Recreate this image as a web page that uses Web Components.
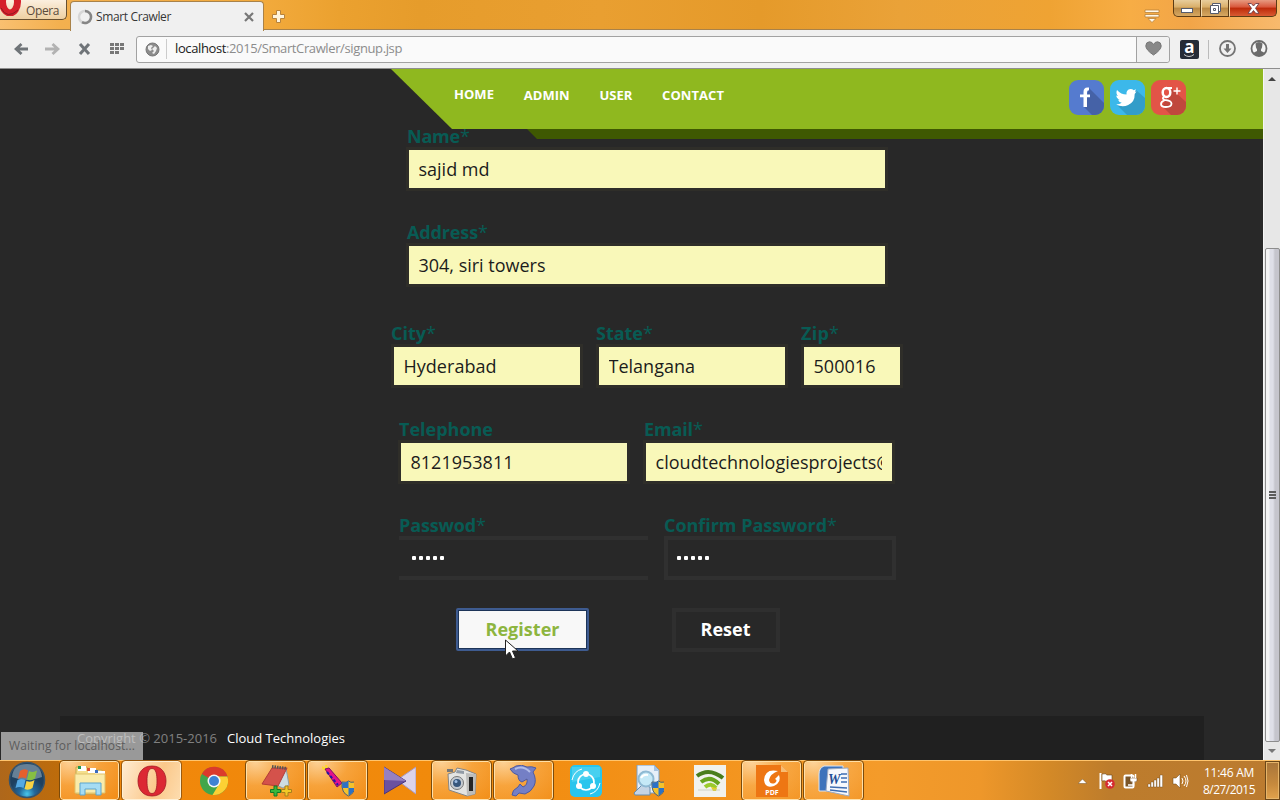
<!DOCTYPE html>
<html lang="en"><head><meta charset="utf-8"><title>Smart Crawler</title>
<style>html,body{margin:0;height:100%;overflow:hidden}body{font-family:"Open Sans","Noto Sans",sans-serif;font-size:12px;background:#282828}</style>
</head><body><desktop-screen></desktop-screen>
<script>
const define=(tag,css,html,ready)=>customElements.define(tag,class extends HTMLElement{
  connectedCallback(){
    if(this.shadowRoot)return;
    this.attachShadow({mode:'open'}).innerHTML='<style>*{box-sizing:border-box}svg{display:block;flex:none}'+css+'</style>'+(typeof html==='function'?html(this):html);
    if(ready)ready(this);
  }
});

// Spreads its text over the width given in "w".
define('fit-text',':host{display:inline-block;white-space:nowrap}','<span><slot></slot></span>',el=>{
  const s=el.shadowRoot.querySelector('span'),w=+el.getAttribute('w');
  const n=el.textContent.length;
  const natural=s.getBoundingClientRect().width;
  if(w&&natural){s.style.letterSpacing=((w-natural)/n)+'px';el.style.width=w+'px';}
});

define('window-button',`:host{display:flex;align-items:center;justify-content:center;width:28px;height:17px;background:linear-gradient(#e8cd9c,#d9ae68 45%,#b98843 50%,#d7a862);border:1px solid #5d3c14;border-top:0;border-left-color:#f4d9aa}
:host([kind=min]){border-radius:0 0 0 5px;border-left-color:#5d3c14}:host([kind=close]){width:48px;background:linear-gradient(#e79a80,#d8563a 45%,#bd2909 50%,#d95b32);border-radius:0 0 5px 0}`,'<slot></slot>');

define('tab-strip',`:host{display:flex;height:30px;position:relative;background:linear-gradient(90deg,#f9c070 0,#f3b04f 60px,#f2aa3c 265px,#eba12f 340px,#e69c2b 420px,#e99f31 600px,#e59a2a 760px,#eaa238 900px,#efa333 1050px,#f7ad45 1130px,#f2a548 1190px,#f8ba6d 1280px);border-bottom:1px solid #a98249}
.opera{width:67px;height:20px;background:linear-gradient(#fbefdf,#eed0a2);border:1px solid #685030;border-top:0;border-left:0;border-radius:0 0 5px 0;color:#5b4b3b;display:flex;align-items:flex-start;overflow:hidden;line-height:20px}
.opera fit-text{margin-left:4px;margin-top:1px}
.tab{margin:1px 0 -1px 3px;width:194px;height:30px;background:#f0f0f0;border:1px solid #a98249;border-bottom:0;border-radius:4px 4px 0 0;display:flex;align-items:center;padding:0 9px 0 6px;color:#363636}
.tab fit-text{margin:-1px 0 0 3px;flex:1}.plus{margin:10px 0 0 8px}.menu{margin:9px 13px 0 auto}.win{display:flex;margin-right:3px}`,
`<div class="opera"><svg width="22" height="16"><ellipse cx="10" cy="2" rx="7.500" ry="11" fill="none" stroke="#d5202b" stroke-width="7"/><path d="M1 8Q7 20 18 10" fill="none" stroke="#8f1821" stroke-width="1"/></svg><fit-text w="33">Opera</fit-text></div>
<div class="tab"><svg width="16" height="16" fill="none" stroke-width="2.500"><circle cx="8" cy="8" r="6" stroke="#d6d6d6"/><path d="M8 2A6 6 0 1 1 5 13.200" stroke="#858585"/></svg><fit-text w="75">Smart Crawler</fit-text><svg width="10" height="10"><path d="M1 1l8 8M9 1L1 9" stroke="#777" stroke-width="2.200"/></svg></div>
<svg class="plus" width="13" height="13"><path d="M4.500.5h4v4h4v4h-4v4h-4v-4h-4v-4h4z" fill="#fff4dc" stroke="#b7833d"/></svg>
<svg class="menu" width="16" height="14"><path d="M1 1h14v2.500H1zM1 5.500h14V8H1zM4 9.500h8l-4 4z" fill="#fff8ea" stroke="#b98137" stroke-width=".8"/></svg>
<div class="win"><window-button kind="min"><svg width="12" height="5" style="margin-top:5px"><rect x=".5" y=".5" width="11" height="4" fill="#fff" stroke="#555b6c"/></svg></window-button><window-button><svg width="13" height="13" fill="#fff" stroke="#555b6c"><path d="M3.500 1.500h8v8h-8z"/><path fill-rule="evenodd" d="M1.500 3.500h8v8h-8zM4.500 6.500v2h2v-2z"/></svg></window-button><window-button kind="close"><svg width="13" height="11"><path d="M1 .5h3.300L6.500 3 8.700.5H12L8.500 5.300 12 10.300H8.700L6.500 7.500 4.300 10.300H1l3.500-5z" fill="#fff" stroke="#70404a" stroke-width=".9"/></svg></window-button></div>`);

define('address-bar',`:host{display:flex;align-items:center;height:39px;background:#f0f0f0;border-bottom:1px solid #8e8e8e;padding-right:12px}
.nav{display:flex;width:136px;padding-left:14px;align-items:center}.nav svg{margin-right:16px}
.url{width:1034px;height:27px;border:1px solid #a2a2a2;border-radius:3px;background:#fafafa;display:flex;align-items:center;padding-left:8px;font-size:13px;color:#8c8c8c}.url fit-text{margin-top:-2px}
b{font-weight:400;color:#202020}.sep{width:1px;height:20px;background:#ccc;margin:0 8px 0 6px}.heart{width:33px;height:25px;border-left:1px solid #a2a2a2;margin-left:auto;display:flex;align-items:center;justify-content:center;background:#f1f1f1;border-radius:0 3px 3px 0}.heart svg{margin-top:-2px}
.amz{width:19px;height:19px;background:#252b36;border-radius:2px;margin-left:10px;display:flex;flex-direction:column;align-items:center;color:#fff;font:bold 17px/14px "Open Sans",sans-serif}.line{width:1px;height:19px;background:#bbb;margin:0 10px 0 9px}`,
`<div class="nav"><svg width="15" height="14"><path d="M14 7H3M7.500 2L2 7l5.500 5" stroke="#6f7478" stroke-width="2.800" fill="none"/></svg><svg width="15" height="14"><path d="M0 7h11M7.500 2L13 7l-5.500 5" stroke="#b2b2b2" stroke-width="2.800" fill="none"/></svg><svg width="14" height="12" style="margin-left:2px"><path d="M2 1l9 10M11 1L2 11" stroke="#6f7478" stroke-width="3"/></svg><svg width="15" height="12" fill="#777" style="margin:-2px 0 0 2px"><path d="M0 1h4v3H0zM5 1h4v3H5zM10 1h4v3h-4zM0 5h4v3H0zM5 5h4v3H5zM10 5h4v3h-4zM0 9h4v3H0zM5 9h4v3H5z"/></svg></div>
<div class="url"><svg width="15" height="15"><circle cx="7.500" cy="7.500" r="6.500" fill="#8c8c8c" stroke="#777"/><path d="M3 4l3-1 2 1-2 2 1 2-2 1-2-2zm7 0l2 2-1 3-2 3-2-1 2-2-2-2z" fill="#eee"/></svg><i class="sep"></i><fit-text w="227"><b>localhost</b>:2015/SmartCrawler/signup.jsp</fit-text><span class="heart"><svg width="17" height="15"><path d="M8.500 14Q1 9 .8 5 .8 1 4.500.8 7.300.8 8.500 3.500 9.700.8 12.500.8 16.200 1 16.200 5 16 9 8.500 14" fill="#888" stroke="#777"/></svg></span></div>
<span class="amz"><span>a</span><svg width="13" height="4"><path d="M1 .5q5 4 10 0" stroke="#ccc" fill="none"/></svg></span><i class="line"></i>
<svg width="18" height="18"><circle cx="8.500" cy="8.500" r="7.500" fill="none" stroke="#747474" stroke-width="1.800"/><path d="M7 4h3v4.500h2.500l-4 4.500-4-4.500H7z" fill="#747474"/></svg>
<svg width="18" height="18" style="margin-left:auto"><circle cx="9" cy="8.500" r="7.500" fill="#f4f4f4" stroke="#6b6b6b" stroke-width="1.800"/><path d="M5.500 3.500Q9 .5 12.500 3.500L12 7.500l-1 2v1.500l4 2Q9 18.500 3 13l4-2V9.500l-1-2z" fill="#6b6b6b"/></svg>`);

define('social-tile',':host{display:block;width:35px;height:35px;border-radius:9px;overflow:hidden;background:var(--tile)}','<slot></slot>');
define('site-header',`:host{display:block;height:70px;position:relative;z-index:1}
.bar{height:60px;background:#8fb81f;margin-left:391px;clip-path:polygon(0 0,100% 0,100% 100%,61px 100%);display:flex;padding:0 77px 0 63px;color:#fff;font:bold 13px/18px "Open Sans",sans-serif}
nav{display:flex;gap:29.700px;padding-top:17px}nav fit-text:first-child{margin-top:-1px}.social{display:flex;gap:6px;margin:11px 0 0 auto}.strip{height:10px;margin-left:527px;background:#3f5902;clip-path:polygon(0 0,100% 0,100% 100%,10px 100%)}`,
`<div class="bar"><nav><fit-text w="40">HOME</fit-text><fit-text w="46">ADMIN</fit-text><fit-text w="33">USER</fit-text><fit-text w="62">CONTACT</fit-text></nav><div class="social">
<social-tile style="--tile:#557bcf"><svg width="35" height="35"><path d="M20 8l15 15v12H23l-8-8z" fill="#4562a7"/><path d="M20 7.500h-1.500q-4 0-4 4.500v2.500H11v2.800h3.500V27H18v-9.700h3V14.500h-3V12q0-1.800 2-1.800z" fill="#fff"/></svg></social-tile>
<social-tile style="--tile:#3cb8ea"><svg width="35" height="35"><path d="M26 10l9 8v17H17L8 26z" fill="#329dc9"/><path d="M7 10q4 4.500 9.500 4.500-.5-5 4-5.500 2 0 3.200 1.200L26 9.200l-1 2.600 1.500-.2-1.800 2.400q.2 8-6.500 11-6 2.700-12-.5 3.500 0 5.500-1.800-3-.6-3.600-3h1.600Q6.500 18.500 6.300 15.500l1.700.4Q5.500 13.500 7 10" fill="#fff"/></svg></social-tile>
<social-tile style="--tile:#e35447"><svg width="35" height="35"><path d="M21 9l14 13v13H20l-9-9z" fill="#c0473d"/><g fill="none" stroke="#fff"><ellipse cx="15.500" cy="12.500" rx="3.800" ry="4.400" stroke-width="2.500"/><path d="M15 8h6M13 16.500q-2.500 2.300.5 3.300 7 .8 7 3.700 0 3.500-5.500 3.500-5 0-5-3 0-2.500 4-4" stroke-width="1.800"/><path d="M26 7.500v7M22.500 11h7" stroke-width="1.400"/></g></svg></social-tile></div></div><div class="strip"></div>`);

define('form-field',`:host{display:block;width:var(--w)}
label{display:flex;height:24px;align-items:center;font-size:18px;line-height:24px;font-weight:700;color:#085b54;padding:2px 0 0 var(--inset,1px)}:host([secret]) label{padding-left:0}label i{font-style:normal;font-weight:400}
.box{height:44px;border:3px solid #2f2e29;background:#f9f8b9;color:#1c1c1c;font-size:18px;line-height:38px;padding:0 10px 0 9.500px;overflow:hidden;white-space:nowrap}.clip{overflow:hidden;display:flex}
:host([secret]) .box{background:#282828;border:4px solid #303030;color:#fff;padding-left:9px}
:host([open]) .box{border-left:0;border-right:0;padding-left:13px}
.dots{display:flex;gap:3px;padding-top:16px}.dots u{width:4px;height:4px;border-radius:1px;background:#fff}`,
el=>`<label><fit-text w="${el.getAttribute('lw')}">${el.getAttribute('label')}</fit-text>${el.hasAttribute('required')?'<i>*</i>':''}</label><div class="box">${el.hasAttribute('secret')?'<div class="dots"><u></u><u></u><u></u><u></u><u></u></div>':`<div class="clip"><fit-text w="${el.getAttribute('vw')}">${el.getAttribute('value')}</fit-text></div>`}</div>`);

define('form-button',`:host{display:flex;align-items:center;justify-content:center;width:108px;height:44px;border:4px solid #2f2f2f;color:#fff;font-size:18px;font-weight:700;box-sizing:border-box;padding:0 1px 2px 0}
:host([primary]){width:133px;height:43px;background:#f8f8f8;color:#8db53f;border:2px solid #3e5b90;border-radius:2px;box-shadow:inset 0 0 0 1px #1d3458;padding-right:0}`,'<slot></slot>');

define('signup-form',`:host{display:flex;flex-direction:column;gap:28px;margin-top:-16px}
.row{display:flex}.wide{padding-left:406px}.three{padding-left:391px;gap:13px;margin-top:5px;--inset:0}.two{padding-left:398px;gap:13px}.pass{padding-left:399px;gap:16px}.actions{padding-left:456px;gap:83px;position:relative}.cursor{position:absolute;left:504px;top:31px}`,
`<div class="row wide"><form-field label="Name" lw="53" required value="sajid md" vw="71" style="--w:482px"></form-field></div>
<div class="row wide"><form-field label="Address" lw="71" required value="304, siri towers" vw="127" style="--w:482px"></form-field></div>
<div class="row three"><form-field label="City" lw="35" required value="Hyderabad" vw="93" style="--w:192px"></form-field><form-field label="State" lw="47" required value="Telangana" vw="86.500" style="--w:192px"></form-field><form-field label="Zip" lw="28" required value="500016" vw="62" style="--w:102px"></form-field></div>
<div class="row two"><form-field label="Telephone" lw="94" value="8121953811" vw="103" style="--w:232px"></form-field><form-field label="Email" lw="49" required value="cloudtechnologiesprojects@" vw="237" style="--w:252px"></form-field></div>
<div class="row pass"><form-field secret open label="Passwod" lw="77" required style="--w:249px"></form-field><form-field secret label="Confirm Password" lw="163" required style="--w:232px"></form-field></div>
<div class="row actions"><form-button primary><fit-text w="74">Register</fit-text></form-button><form-button><fit-text w="50">Reset</fit-text></form-button>
<svg class="cursor" width="17" height="22"><path d="M1.500 1v16l4-4 3 7 3-1.300-3-6.700h5.500z" fill="#fff" stroke="#222"/></svg></div>`);

define('site-footer',`:host{display:flex;align-items:center;margin:auto 59px 0 60px;height:44px;background:#202020;color:#808080;font-size:13px;padding-left:17px;gap:10px;position:relative;box-sizing:border-box}b{font-weight:400;color:#fff}`,'<fit-text w="140">Copyright © 2015-2016</fit-text><b><fit-text w="118">Cloud Technologies</fit-text></b>');
// Translucent, so the footer text stays visible through it.
define('status-bubble',':host{position:absolute;left:1px;bottom:0;width:142px;height:28px;background:rgba(227,227,227,.62);color:#5c5c5c;display:flex;align-items:center;padding:0 0 2px 8px;box-sizing:border-box;z-index:2}','<fit-text w="126">Waiting for localhost...</fit-text>');

define('scroll-bar',`:host{display:flex;flex-direction:column;width:17px;background:#e7e7e7;border-left:1px solid #f6f6f6;align-items:center;box-sizing:border-box}
svg{margin-top:7px}.thumb{margin-top:167px;width:15px;height:494px;border:1px solid #8d8d8d;border-radius:2px;background:linear-gradient(90deg,#f3f3f4 0 3px,#dedfe8 4px 7px,#c5c5cd 9px);display:flex;flex-direction:column;gap:1px;align-items:center;justify-content:center}.thumb i{height:2px;width:7px;background:#5c5c5c}`,
'<svg width="8" height="5"><path d="M0 5l4-4 4 4z" fill="#444"/></svg><div class="thumb"><i></i><i></i><i></i></div><svg width="8" height="5"><path d="M0 0l4 4 4-4z" fill="#777"/></svg>');

define('task-item',`:host{display:flex;align-items:center;justify-content:center;height:39px;border:1px solid transparent;border-radius:3px;box-sizing:border-box}
:host([open]){border-color:#ffe0a8;outline:1px solid #7c4b0b;background:radial-gradient(ellipse at 15% 0,#ffe2b7cc,#fbb45b99 45%,#f3952a66)}
:host([active]){border-color:#fff0d4;outline:1px solid #9a5a10;background:linear-gradient(110deg,#ffebd0,#fbc88a 60%,#fddcae)}`,'<slot></slot>');

const shield='<g><path d="M20 17q5 1 6.500-1 1.500 2 6.500 1 1 11-6.500 14Q19 28 20 17" fill="#f4c22c" stroke="#4b6078"/><path d="M26.500 16v7H20.200V17.300q4 .7 6.300-1.300M26.500 23h6q-.8 5.500-6 7.500z" fill="#2c71c6"/></g>';
const icons={
folder:'<path d="M2 2h11l2 3h13v24H2z" fill="#f5df8c" stroke="#c6a64c"/><path d="M4 1h8v5H4zM14 3h8v5h-8zM21 6h10v5H21z" fill="#fff"/><path d="M4 1h3v3H4z" fill="#24974e"/><path d="M13 3h3v3h-3z" fill="#dc5134"/><path d="M21 5h3v3h-3z" fill="#3b6bbe"/><path d="M1 9h30v19H1z" fill="#faeba9" stroke="#dfc26a"/><path d="M6 18h21v12h-5v-6H11v6H6z" fill="#a5dcf4" stroke="#5da5cd"/>',
opera:'<path fill-rule="evenodd" d="M16 1C6 1 2 8.500 2 16s4 15 14 15 14-7.500 14-15S26 1 16 1m0 2.500c4 0 5 6 5 12.500S20 28.500 16 28.500s-5-6-5-12.500S12 3.500 16 3.500" fill="#dc2833" stroke="#a21b25" stroke-width=".8"/>',
chrome:'<circle cx="16" cy="16" r="14" fill="#42a64a"/><path d="M16 16L3.900 9A14 14 0 0 1 29.500 11.500H16z" fill="#db3a2c"/><path d="M16 11.500h13.300A14 14 0 0 1 14.500 30l6-10z" fill="#fcd034"/><circle cx="16" cy="16" r="6.500" fill="#f7f7f7"/><circle cx="16" cy="16" r="5" fill="#3e82d4"/>',
notes:'<path d="M26 3l3 17-6 3-9-4z" fill="#cddde3" stroke="#8da1a8"/><path d="M12 3h15l-9 18-16-2z" fill="#d4524b" stroke="#b13c37"/><path d="M12 1.500l15 2" stroke="#555" stroke-width="3" stroke-dasharray="1.500 1"/><path d="M14 21h3v3.500h3.500v3H17V31h-3v-3.500h-3.500v-3H14z" fill="#39b83c" stroke="#157826"/><path d="M25 21h3v3.500h3.500v3H28V31h-3v-3.500h-3.500v-3H25z" fill="#f2c927" stroke="#a8801c"/>',
rocket:'<path d="M0 2l5 4M4 0l1 6" stroke="#fd2" stroke-width="2"/><path d="M3 4l4-1 13 15-5 4z" fill="#e3128c" stroke="#7b1268"/><path d="M5 7l11 13" stroke="#2718a0" stroke-width="2" stroke-dasharray="3 2"/>'+shield,
play:'<path d="M32 2v27L13 15z" fill="#dcd3ea" stroke="#a99bc5"/><path d="M0 2v27l22-13z" fill="#6a519f" stroke="#49347c"/><path d="M0 2l22 14L0 15z" fill="#9680c0"/>',
camera:'<path d="M2 9l7-2 2-4 9 2 10 4-1 20-8 2L3 25z" fill="#e4e4e2" stroke="#858585"/><path d="M20 8l10 1-1 20-8 2z" fill="#bcbcba"/><path d="M23 12h4v14h-4z" fill="#252525"/><path d="M11 5l7 1v3l-8-1z" fill="#929ba5"/><circle cx="11" cy="18" r="6.500" fill="#c7ccd2" stroke="#777"/><circle cx="11" cy="18" r="4" fill="#38577c"/><circle cx="10" cy="16.500" r="1.500" fill="#9dbce2"/><path d="M1 4h6v3H1z" fill="#777"/>',
dolphin:'<path d="M2 4Q5 3 8 1q6-2 11 1 5-1 9 1l-3 4q4 8 1 14-3 6-9 8l-6-1-3 3-4-1q0-5 6-8l2-3 3 3q5-2 4-8l-5 3q-4-1-4-7Q5 9 2 4" fill="#747fc5" stroke="#4e5aa0"/><path d="M7 4q8-4 15 3" stroke="#b3bde8" stroke-width="2" fill="none"/>',
share:'<rect width="32" height="32" rx="5" fill="#29c5ed"/><path d="M2 2h28v10L2 17z" fill="#65dbf4" opacity=".5"/><g stroke="#fff" fill="none"><circle cx="16" cy="17" r="8" stroke-width="1.700"/><path d="M2 15Q4 6 12 4M30 18q-2 9-10 11"/></g><g fill="#fff"><circle cx="16" cy="9" r="3"/><circle cx="9" cy="21" r="3"/><circle cx="23" cy="21" r="3"/></g>',
search:'<path d="M5 0h17l5 5v23H5z" fill="#e6eff9" stroke="#7b9fc4"/><path d="M22 0v6h5" fill="#a6c2df"/><path d="M10 20L2 28l1 2h15v-8z" fill="#c5d4e4" stroke="#668cac"/><circle cx="14" cy="14" r="7.500" fill="#c5e9f7" stroke="#8fb9d3" stroke-width="2"/><path d="M9 13q2-4 7-3" stroke="#fff" stroke-width="2" fill="none"/>'+shield,
wifi:'<path d="M0 0h32v32H0z" fill="#f1f2ed"/><g fill="none" stroke-width="4"><path d="M3 11Q15 2 29 13" stroke="#497d1b"/><path d="M7 17q9-7 18 2" stroke="#68a41e"/><path d="M11 22q6-5 11 1" stroke="#9aca2d"/></g><path d="M17 22l6 1-1 3h-3z" fill="#e1cf2a"/><path d="M4 25h22" stroke="#b9c0ae" opacity=".6"/>',
pdf:'<path d="M0 0h25l7 7v25H0z" fill="#ee7613"/><path d="M25 0v7h7z" fill="#f7bc72"/><path d="M22 6Q9 3 8 15q1 9 10 6 8-4 5-11l-4 4q3 1 0 4-5 2-6-3 1-6 9-9" fill="#fff"/><text x="16" y="30" text-anchor="middle" font-family="Open Sans" font-size="7" font-weight="700" fill="#fff">PDF</text>',
word:'<path d="M6 1h19v25H1V9q0-6 5-8" fill="#3e73bb" stroke="#d9e5f4"/><path d="M10 4l20-1 1 28-23-5z" fill="#f6f8fc" stroke="#9caac1"/><path d="M23 9h6M23 13h6M23 17h6M12 22l17 1M12 25l17 2" stroke="#3f6eb1" stroke-width="1.500"/><text x="10" y="19" font-family="Liberation Serif" font-size="14" font-weight="700" font-style="italic" fill="#234e94">W</text>'};
const item=(n,s='')=>`<task-item ${s}><svg width="32" height="32" viewBox="0 0 32 32">${icons[n]}</svg></task-item>`;

define('task-bar',`:host{display:flex;height:40px;border-top:1px solid #ffc46c;box-sizing:border-box;background:linear-gradient(90deg,#f1860a 0,#f18a0b 440px,#f39118 640px,#f49b2a 880px,#ee972a 980px,#d38927 1050px,#bd7c2c 1110px,#bb7b30 1280px)}
.start{width:59px;background:linear-gradient(90deg,#ae671b,#be6c0b);padding:0 0 0 8px}.items{display:flex;gap:3px;padding-left:1px}.items>*{flex:none;width:59px}
.tray{display:flex;margin-left:auto;align-items:center;gap:8px}.clock{width:60px;display:flex;flex-direction:column;align-items:center;color:#fff;line-height:17px;margin:1px 1px 0 2px}.peek{width:15px;height:39px;border:1px solid #6b4719;box-shadow:inset 0 0 0 1px #e6b56a;background:linear-gradient(#a8753a,#c78a3d 60%,#e2a34d);margin-left:-3px}.tray>*{flex:none}`,
`<div class="start"><svg width="38" height="38"><defs><radialGradient id="orb" cx=".5" cy=".9"><stop stop-color="#48c7ec"/><stop offset=".45" stop-color="#22679a"/><stop offset="1" stop-color="#1e405f"/></radialGradient></defs><circle cx="19" cy="19" r="17.500" fill="url(#orb)" stroke="#37536b" stroke-width="1.500"/><path d="M4 16Q5 3 19 3t15 13q-15 6-30 0" fill="#d2e2e9" opacity=".4"/><path d="M12 10q4-3 8-.5l-2 8q-4-2-8 .5z" fill="#e5602d"/><path d="M21 10q4 2 8-.5l-2 8q-4 3-8 1z" fill="#86bf43"/><path d="M9.500 19q4-2 8 0l-2 8q-4-2-8 0z" fill="#55a9e3"/><path d="M18.500 20q4 2 8-1l-2 8q-4 3-8 1z" fill="#f9d243"/></svg></div>
<div class="items">${item('folder','open')+item('opera','open active')+item('chrome')+item('notes','open')+item('rocket','open')+item('play')+item('camera','open')+item('dolphin','open')+item('share')+item('search')+item('wifi')+item('pdf','open')+item('word','open')}</div>
<div class="tray"><svg width="9" height="6"><path d="M0 5.500L4.500 1 9 5.500z" fill="#fff" stroke="#765020" stroke-width=".5"/></svg>
<svg width="16" height="18" style="margin-left:4px"><path d="M1.500 1v16" stroke="#fff" stroke-width="2"/><path d="M3 2q4-1 5 1h5v7H8q-2-2-5-1z" fill="#fff" stroke="#68431a" stroke-width=".6"/><circle cx="11" cy="12" r="4.800" fill="#d62b31"/><path d="M9 10l4 4M13 10l-4 4" stroke="#fff" stroke-width="1.500"/></svg>
<svg width="16" height="18"><rect x="1.500" y="3.500" width="9" height="12" rx="1" fill="#7b5629" stroke="#fff" stroke-width="2"/><path d="M7 6h7v3q-3.500 3-7 0z" fill="#fff" stroke="#68431a" stroke-width=".5"/><path d="M8.500 2v4M12.500 2v4M10.500 10v3H5" fill="none" stroke="#fff" stroke-width="1.500"/></svg>
<svg width="17" height="14" fill="#fff" stroke="#684514" stroke-width=".4"><path d="M1 10h2.400v3H1zM4 8h2.400v5H4zM7 6h2.400v7H7zM10 4h2.400v9H10zM13 1h2.600v12H13z"/></svg>
<svg width="17" height="16"><path d="M1 5h3l4-4v14l-4-4H1z" fill="#fff" stroke="#684514" stroke-width=".5"/><path d="M10 5q2 3 0 6M12 3q4 5 0 10M14.500 2q3 6 0 12" fill="none" stroke="#fff"/></svg>
<div class="clock"><fit-text w="50">11:46 AM</fit-text><fit-text w="52">8/27/2015</fit-text></div><div class="peek"></div></div>`);

define('desktop-screen',`:host{display:flex;flex-direction:column;width:1280px;height:800px;overflow:hidden}tab-strip,address-bar{box-sizing:border-box;flex:none}.view{display:flex;height:691px;flex:none}.page{flex:1;background:#282828;display:flex;flex-direction:column;position:relative}signup-form,site-header{flex:none}`,
'<tab-strip></tab-strip><address-bar></address-bar><div class="view"><div class="page"><site-header></site-header><signup-form></signup-form><site-footer></site-footer><status-bubble></status-bubble></div><scroll-bar></scroll-bar></div><task-bar></task-bar>');
</script></body></html>
